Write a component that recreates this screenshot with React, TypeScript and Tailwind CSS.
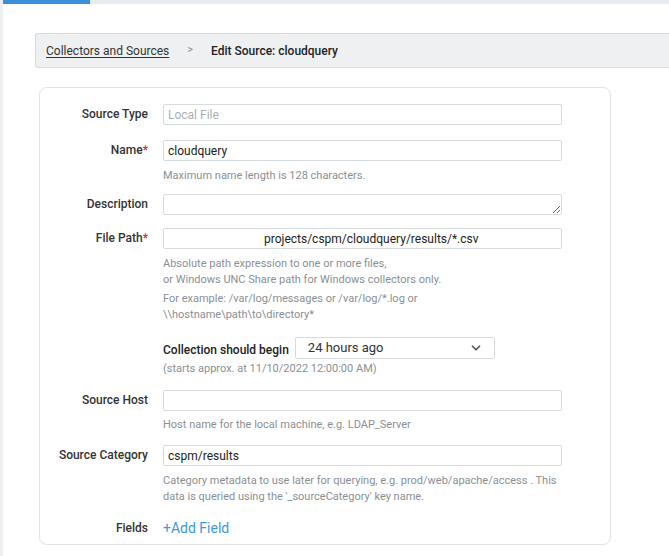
import { ChevronDown } from 'lucide-react';
import type { ReactNode } from 'react';

type FieldProps = {
  label: string;
  required?: boolean;
  className?: string;
  children: ReactNode;
};

const inputCls =
  'block w-[399px] h-[21px] border border-[#d6dbe0] rounded-[2px] px-[4px] text-[12px] text-[#222] outline-none bg-white';

const Help = ({ children, className = '' }: { children: ReactNode; className?: string }) => (
  <p className={`text-[11px] leading-[16px] text-[#8a8f94] ${className}`}>{children}</p>
);

const Field = ({ label, required, className = '', children }: FieldProps) => (
  <div className={`flex gap-[15px] ${className}`}>
    <div className="w-[108px] shrink-0 text-right text-[12px] leading-[21px] font-medium text-[#333]">
      {label}
      {required && <span className="text-[#e0262f]">*</span>}
    </div>
    <div className="flex flex-col">{children}</div>
  </div>
);

const App = () => {
  return (
    <div className="min-h-[556px] bg-white border-l-[3px] border-[#eceef0] font-['Roboto',sans-serif]">
      <div className="h-[4px] bg-[#e9ecef]">
        <div className="h-full w-[87px] bg-[#3b8fd8]" />
      </div>

      <div className="ml-[32px] mt-[29px] flex h-[35px] items-center gap-[18px] rounded-l-[3px] border border-r-0 border-[#d5d9dc] bg-[#eef0f2] pl-[10px] text-[12px]">
        <a href="#" className="text-[#333] underline underline-offset-2">
          Collectors and Sources
        </a>
        <span className="text-[11px] text-[#888]">&gt;</span>
        <span className="font-medium text-[#222]">Edit Source: cloudquery</span>
      </div>

      <div className="ml-[36px] mt-[19px] w-[572px] rounded-[8px] border border-[#dfe3e7] pt-[16px] pb-[5px]">
        <Field label="Source Type">
          <input
            className={`${inputCls} bg-[#f7f8f8] placeholder:text-[#aab0b5]`}
            placeholder="Local File"
            disabled
          />
        </Field>

        <Field label="Name" required className="mt-[15px]">
          <input className={inputCls} defaultValue="cloudquery" />
          <Help className="mt-[7px]">Maximum name length is 128 characters.</Help>
        </Field>

        <Field label="Description" className="mt-[10px]">
          <textarea
            rows={1}
            className="block w-[399px] h-[21px] border border-[#d6dbe0] rounded-[2px] px-[4px] text-[12px] outline-none"
          />
        </Field>

        <Field label="File Path" required className="mt-[13px]">
          <input
            className={`${inputCls} pl-[100px]`}
            defaultValue="projects/cspm/cloudquery/results/*.csv"
          />
          <Help className="mt-[7px]">
            Absolute path expression to one or more files,
            <br />
            or Windows UNC Share path for Windows collectors only.
          </Help>
          <Help className="mt-[3px]">
            For example: /var/log/messages or /var/log/*.log or
            <br />
            \\hostname\path\to\directory*
          </Help>
          <div className="mt-[14px] flex items-center gap-[6px]">
            <span className="text-[12px] font-medium text-[#222] pt-[3px]">Collection should begin</span>
            <div className="flex h-[22px] w-[200px] items-center justify-between rounded-[2px] border border-[#d6dbe0] pl-[12px] pr-[11px] text-[13px] text-[#333]">
              24 hours ago
              <ChevronDown size={14} strokeWidth={3} className="text-[#555]" />
            </div>
          </div>
          <Help className="mt-[2px]">(starts approx. at 11/10/2022 12:00:00 AM)</Help>
        </Field>

        <Field label="Source Host" className="mt-[13px]">
          <input className={inputCls} />
          <Help className="mt-[6px]">Host name for the local machine, e.g. LDAP_Server</Help>
        </Field>

        <Field label="Source Category" className="mt-[12px]">
          <input className={inputCls} defaultValue="cspm/results" />
          <Help className="mt-[7px]">
            Category metadata to use later for querying, e.g. prod/web/apache/access . This
            <br />
            data is queried using the '_sourceCategory' key name.
          </Help>
        </Field>

        <Field label="Fields" className="mt-[13px]">
          <a href="#" className="text-[14px] leading-[21px] text-[#3a9ad9]">
            +Add Field
          </a>
        </Field>
      </div>
    </div>
  );
};

export default App;
